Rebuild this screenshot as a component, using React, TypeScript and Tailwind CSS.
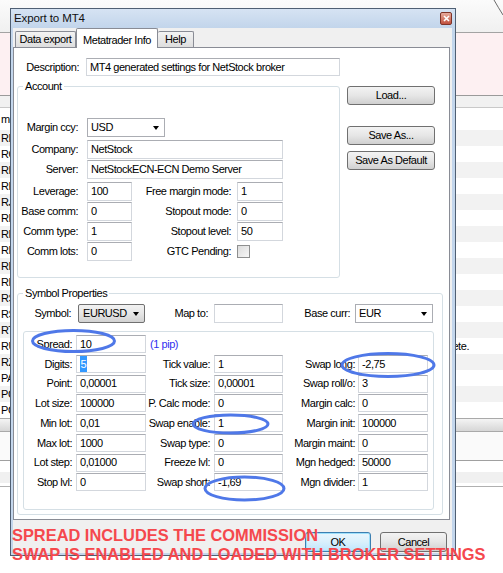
import React from 'react';

// Background application rows peeking out around the dialog
const rowCodes = ['RD', 'RO', 'RH', 'RH', 'RJ', 'RN', 'RN', 'RN', 'RP', 'RP', 'RS', 'RS', 'RT', 'RU', 'RZ', 'PA', 'PC', 'PC'];

type Pair = [string, string];

interface PropRow {
  a: Pair;
  b: Pair | 'pip';
  c: Pair | null;
}

const propRows: PropRow[] = [
  { a: ['Spread:', '10'], b: 'pip', c: null },
  { a: ['Digits:', '5'], b: ['Tick value:', '1'], c: ['Swap long:', '-2,75'] },
  { a: ['Point:', '0,00001'], b: ['Tick size:', '0,00001'], c: ['Swap roll/o:', '3'] },
  { a: ['Lot size:', '100000'], b: ['P. Calc mode:', '0'], c: ['Margin calc:', '0'] },
  { a: ['Min lot:', '0,01'], b: ['Swap enable:', '1'], c: ['Margin init:', '100000'] },
  { a: ['Max lot:', '1000'], b: ['Swap type:', '0'], c: ['Margin maint:', '0'] },
  { a: ['Lot step:', '0,01000'], b: ['Freeze lvl:', '0'], c: ['Mgn hedged:', '50000'] },
  { a: ['Stop lvl:', '0'], b: ['Swap short:', '-1,69'], c: ['Mgn divider:', '1'] },
];

function Label({ children, className = '' }: { children: React.ReactNode; className?: string }) {
  return <div className={`shrink-0 whitespace-nowrap text-right ${className}`}>{children}</div>;
}

function TextBox({
  value,
  className = '',
  children,
}: {
  value?: string;
  className?: string;
  children?: React.ReactNode;
}) {
  return (
    <div
      className={`flex h-full shrink-0 items-center overflow-hidden whitespace-nowrap border border-[#d3d7dd] border-t-[#abadb3] bg-white pl-[3px] ${className}`}
    >
      {children ?? value}
    </div>
  );
}

function Arrow() {
  return <span className="h-0 w-0 border-x-[3.5px] border-t-[4px] border-x-transparent border-t-black" />;
}

function Combo({ value, className = '' }: { value: string; className?: string }) {
  return (
    <div
      className={`flex h-full shrink-0 items-center justify-between border border-[#abadb3] bg-white pl-[3px] pr-[5px] ${className}`}
    >
      <span>{value}</span>
      <Arrow />
    </div>
  );
}

function DropButton({ value, className = '' }: { value: string; className?: string }) {
  return (
    <div
      className={`flex h-full shrink-0 items-center justify-between rounded-[2px] border border-[#707070] bg-gradient-to-b from-[#f2f2f2] via-[#e6e6e6] to-[#d2d2d2] pl-[4px] pr-[5px] ${className}`}
    >
      <span>{value}</span>
      <Arrow />
    </div>
  );
}

function PushButton({ children, className = '' }: { children: React.ReactNode; className?: string }) {
  return (
    <div
      className={`flex h-[19px] shrink-0 items-center justify-center rounded-[3px] border border-[#707070] bg-gradient-to-b from-[#f3f3f3] via-[#e6e6e6] to-[#d0d0d0] ${className}`}
    >
      {children}
    </div>
  );
}

function GroupBox({
  caption,
  className = '',
  children,
}: {
  caption: string;
  className?: string;
  children: React.ReactNode;
}) {
  return (
    <div className={`relative shrink-0 rounded-[3px] border border-[#d5dfe5] ${className}`}>
      {caption && (
        <div className="absolute left-[5px] top-[-7px] bg-white px-[2px] leading-[13px]">{caption}</div>
      )}
      {children}
    </div>
  );
}

function BackgroundApp() {
  return (
    <div className="flex flex-col">
      <div className="h-[33px] border-b border-[#a3a3a3] bg-gradient-to-b from-[#fbfbfb] to-[#f0f0f0]" />
      <div className="h-[63px] border-b border-[#9a9a9a] bg-[#fdf0f2]" />
      <div className="h-[12px] border-b border-[#c9c9c9] bg-[#f1f1f1]" />
      <div className="flex h-[22px] items-center pl-[1px]">me</div>
      {rowCodes.map((code, i) => (
        <div
          key={i}
          className={`flex h-[16px] items-center pl-[1px] ${i % 2 === 0 ? 'bg-[#f2f2f2]' : 'bg-white'}`}
        >
          <span className="w-[20px]">{code}</span>
          {i === 13 && <span className="w-[448px] text-right">complete.</span>}
        </div>
      ))}
      <div className="h-[14px] border-y border-[#a9a9a9] bg-gradient-to-b from-[#f4f4f4] to-[#d6d6d6]" />
      <div className="h-[29px] border-b border-[#a0a0a0] bg-[#fafafa]" />
      <div className="h-[11px]" />
      <div className="h-[11px] bg-[#f0f0f0]" />
      <div className="h-[4px] border-b border-[#b0b0b0]" />
      <svg className="absolute right-0 top-0" width="10" height="16" viewBox="0 0 10 16">
        <path d="M1 0 Q5 7 10 15" fill="none" stroke="#6b6b6b" strokeWidth="1" />
      </svg>
    </div>
  );
}

function AccountGroup() {
  return (
    <GroupBox caption="Account" className="h-[192px] w-[323px] pt-[31px]">
      <div className="flex flex-col gap-[1px]">
        <div className="flex h-[19px] items-center">
          <Label className="w-[60px]">Margin ccy:</Label>
          <Combo value="USD" className="ml-[9px] w-[78px]" />
        </div>
        <div className="mt-[2px] flex h-[19px] items-center">
          <Label className="w-[60px]">Company:</Label>
          <TextBox value="NetStock" className="ml-[9px] w-[196px]" />
        </div>
        <div className="flex h-[19px] items-center">
          <Label className="w-[60px]">Server:</Label>
          <TextBox value="NetStockECN-ECN Demo Server" className="ml-[9px] w-[196px]" />
        </div>
        <div className="mt-[2px] flex h-[19px] items-center">
          <Label className="w-[60px]">Leverage:</Label>
          <TextBox value="100" className="ml-[9px] w-[45px]" />
          <Label className="w-[99px]">Free margin mode:</Label>
          <TextBox value="1" className="ml-[6px] w-[46px]" />
        </div>
        <div className="flex h-[19px] items-center">
          <Label className="w-[60px]">Base comm:</Label>
          <TextBox value="0" className="ml-[9px] w-[45px]" />
          <Label className="w-[99px]">Stopout mode:</Label>
          <TextBox value="0" className="ml-[6px] w-[46px]" />
        </div>
        <div className="flex h-[19px] items-center">
          <Label className="w-[60px]">Comm type:</Label>
          <TextBox value="1" className="ml-[9px] w-[45px]" />
          <Label className="w-[99px]">Stopout level:</Label>
          <TextBox value="50" className="ml-[6px] w-[46px]" />
        </div>
        <div className="flex h-[19px] items-center">
          <Label className="w-[60px]">Comm lots:</Label>
          <TextBox value="0" className="ml-[9px] w-[45px]" />
          <Label className="w-[99px]">GTC Pending:</Label>
          <div className="ml-[6px] h-[13px] w-[13px] border border-[#8e8f8f] bg-gradient-to-br from-[#dcdcdc] to-[#f7f7f7]" />
        </div>
      </div>
    </GroupBox>
  );
}

function SymbolGroup() {
  return (
    <GroupBox caption="Symbol Properties" className="ml-[3px] mt-[15px] h-[222px] w-[426px] pt-[10px]">
      <div className="flex h-[19px] items-center">
        <Label className="w-[53px]">Symbol:</Label>
        <DropButton value="EURUSD" className="ml-[7px] w-[67px]" />
        <Label className="w-[63px]">Map to:</Label>
        <TextBox className="ml-[6px] w-[69px]" />
        <Label className="w-[67px]">Base curr:</Label>
        <Combo value="EUR" className="ml-[5px] w-[78px]" />
      </div>
      <div className="ml-[5px] mt-[8px] h-[179px] w-[411px] rounded-[3px] border border-[#d5dfe5] pt-[3px]">
        <div className="flex flex-col gap-[1.75px]">
          {propRows.map((row, i) => (
            <div key={i} className="flex h-[18px] items-center">
              <Label className="w-[48px]">{row.a[0]}</Label>
              {row.a[0] === 'Digits:' ? (
                <TextBox className="ml-[4px] w-[70px] border-[#569de5] border-t-[#3d7bad]">
                  <span className="bg-[#3399ff] px-[0.5px] text-white">{row.a[1]}</span>
                </TextBox>
              ) : (
                <TextBox value={row.a[1]} className="ml-[4px] w-[70px]" />
              )}
              {row.b === 'pip' ? (
                <div className="w-[137px] shrink-0 pl-[4px] text-[#2f2ff0]">(1 pip)</div>
              ) : (
                <>
                  <Label className="w-[64px]">{row.b[0]}</Label>
                  <TextBox value={row.b[1]} className="ml-[4px] w-[69px]" />
                </>
              )}
              {row.c && (
                <>
                  <Label className="w-[72px]">{row.c[0]}</Label>
                  <TextBox value={row.c[1]} className="ml-[3px] w-[70px]" />
                </>
              )}
            </div>
          ))}
        </div>
      </div>
    </GroupBox>
  );
}

function ExportDialog() {
  return (
    <div className="absolute left-[10px] top-[8px] flex h-[548px] w-[446px] flex-col border border-[#4f5f73] bg-[#c3d6ec] pb-[2px] pl-[2px] pr-[3px]">
      {/* Title bar */}
      <div className="-ml-[2px] -mr-[3px] flex h-[19px] shrink-0 items-center justify-between bg-gradient-to-b from-[#d6e3f3] to-[#c2d5eb] pl-[3px] pr-[3px]">
        <span className="text-[11.5px] tracking-[-0.1px] text-[#111]">Export to MT4</span>
        <div className="flex h-[13px] w-[12px] items-center justify-center rounded-[2px] border border-[#7e3429] bg-gradient-to-b from-[#e6aa9c] to-[#c0503e]">
          <svg width="7" height="7" viewBox="0 0 7 7">
            <path d="M1 1 L6 6 M6 1 L1 6" stroke="white" strokeWidth="1.6" />
          </svg>
        </div>
      </div>

      {/* Client area */}
      <div className="flex flex-1 flex-col bg-[#f0f0f0]">
        {/* Tabs */}
        <div className="relative z-10 flex h-[19px] shrink-0 items-end pl-[2px]">
          <div className="flex h-[16px] w-[61px] items-center justify-center rounded-t-[2px] border border-b-0 border-[#898c95] bg-gradient-to-b from-[#f3f3f3] to-[#dedede]">
            Data export
          </div>
          <div className="-mb-[1px] flex h-[20px] w-[82px] items-start justify-center rounded-t-[2px] border border-b-0 border-[#898c95] bg-white pt-[3px]">
            Metatrader Info
          </div>
          <div className="flex h-[16px] w-[36px] items-center justify-center rounded-t-[2px] border border-b-0 border-l-0 border-[#898c95] bg-gradient-to-b from-[#f3f3f3] to-[#dedede]">
            Help
          </div>
        </div>

        {/* Tab page */}
        <div className="mr-[2px] h-[473px] shrink-0 border border-[#898c95] bg-white">
          <div className="mt-[10px] flex h-[18px] items-center">
            <Label className="w-[65px]">Description:</Label>
            <TextBox value="MT4 generated settings for NetStock broker" className="ml-[7px] w-[254px]" />
          </div>

          <div className="mt-[10px] flex items-start">
            <div className="ml-[3px]">
              <AccountGroup />
            </div>
            <div className="ml-[7px] flex w-[88px] flex-col">
              <PushButton>Load...</PushButton>
              <PushButton className="mt-[21px]">Save As...</PushButton>
              <PushButton className="mt-[6px]">Save As Default</PushButton>
            </div>
          </div>

          <SymbolGroup />
        </div>

        {/* Dialog buttons */}
        <div className="flex h-[32px] shrink-0 items-start justify-end gap-[9px] pr-[5px] pt-[12px]">
          <div className="flex h-[20px] w-[66px] items-center justify-center rounded-[3px] border border-[#3c7fb1] bg-gradient-to-b from-[#eaf6fd] via-[#d9f0fc] to-[#bee6fd] shadow-[inset_0_0_0_1px_#9ee0fb]">
            OK
          </div>
          <div className="flex h-[20px] w-[67px] items-center justify-center rounded-[3px] border border-[#707070] bg-gradient-to-b from-[#f3f3f3] via-[#e6e6e6] to-[#d0d0d0]">
            Cancel
          </div>
        </div>
      </div>
    </div>
  );
}

function Annotations() {
  return (
    <>
      <svg className="pointer-events-none absolute left-0 top-0" width="503" height="573" viewBox="0 0 503 573">
        <g fill="none" stroke="#4f78e8" strokeWidth="3">
          <ellipse cx="73.5" cy="341" rx="41" ry="10.5" />
          <ellipse cx="388" cy="365" rx="46" ry="11.5" />
          <ellipse cx="230.5" cy="424" rx="37.5" ry="9" />
          <ellipse cx="244.5" cy="488.5" rx="39.5" ry="11.5" />
        </g>
      </svg>
      <div className="pointer-events-none absolute left-[12px] top-[526px] whitespace-nowrap text-[16.4px] font-bold leading-[19px] tracking-normal text-[#f5484d]">
        <div>SPREAD INCLUDES THE COMMISSION</div>
        <div>SWAP IS ENABLED AND LOADED WITH BROKER SETTINGS</div>
      </div>
    </>
  );
}

export default function App() {
  return (
    <div className="relative h-[573px] w-[503px] overflow-hidden bg-white text-[11px] tracking-[-0.45px] text-black [font-family:'Liberation_Sans',Arial,sans-serif]">
      <BackgroundApp />
      <ExportDialog />
      <Annotations />
    </div>
  );
}
